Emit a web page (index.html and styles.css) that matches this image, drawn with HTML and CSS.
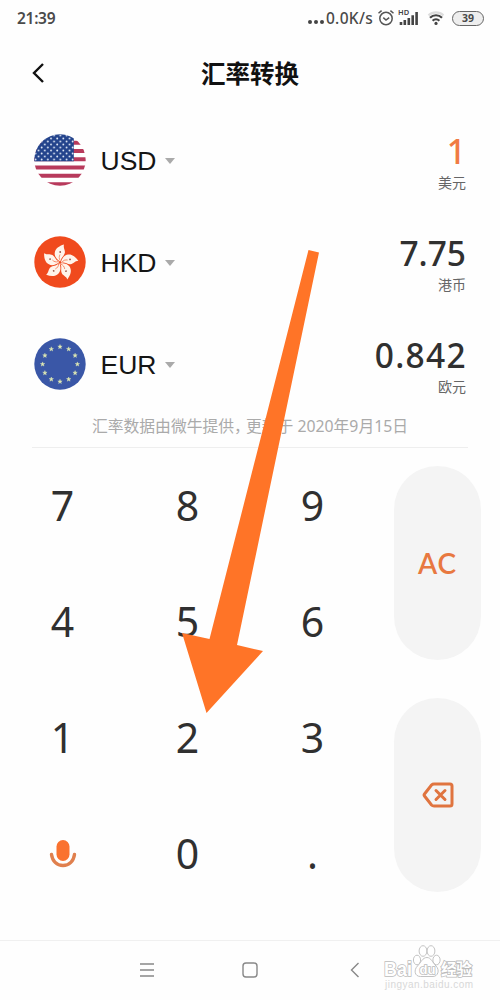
FILE: index.html
```html
<!DOCTYPE html>
<html lang="zh-CN">
<head>
    <meta charset="UTF-8">
    <meta name="viewport" content="width=device-width, initial-scale=1.0">
    <title>汇率转换</title>
    <link rel="stylesheet" href="styles.css">
</head>
<body>
    <div class="status-bar">
        <span class="time">21:39</span>
        <div class="status-icons">
            <span class="dots"><i></i><i></i><i></i></span>
            <span class="speed">0.0K/s</span>
            <svg class="alarm" width="18" height="18" viewBox="0 0 18 18">
                <circle cx="9" cy="9.5" r="6.2"/>
                <path d="M1.5 4.2 4.6 1.6M16.5 4.2 13.4 1.6M6.3 8.6 9 11l3.2-2.4"/>
            </svg>
            <svg class="signal" width="21" height="22" viewBox="0 -2 21 22">
                <text x="0" y="6">HD</text>
                <path d="M3 13v3M6.8 11v5M10.8 9v7M14.7 6.2V16M18.6 3V16"/>
            </svg>
            <svg class="wifi" width="18" height="16" viewBox="0 0 18 16">
                <path class="weak" d="M1.5 5.4a11 11 0 0 1 15 0"/>
                <path d="M3 7.7a8.6 8.6 0 0 1 12 0M5.6 10.7a5 5 0 0 1 6.8 0"/>
                <circle cx="9" cy="13.4" r="1.6"/>
            </svg>
            <span class="battery">39</span>
        </div>
    </div>

    <header>
        <svg class="back" width="14" height="20" viewBox="0 0 14 20"><path d="M12 1 3 10l9 9"/></svg>
        <h1>汇率转换</h1>
    </header>

    <main class="currencies">
        <div class="row">
            <svg class="flag" viewBox="0 0 52 52">
                <defs>
                    <clipPath id="round"><circle cx="26" cy="26" r="25.7"/></clipPath>
                    <pattern id="stars" width="6.2" height="6" patternUnits="userSpaceOnUse">
                        <circle cx="1.5" cy="1.5" r="0.9"/>
                        <circle cx="4.6" cy="4.5" r="0.9"/>
                    </pattern>
                </defs>
                <g clip-path="url(#round)">
                    <rect width="52" height="52" fill="#fff"/>
                    <path d="M0 8.8h52M0 17h52M0 25.2h52M0 33.5h52M0 41.8h52M0 50.2h52" stroke="#b83a5c" stroke-width="4.1"/>
                    <rect width="39.8" height="27.3" fill="#24448c"/>
                    <rect width="39.8" height="27.3" fill="url(#stars)"/>
                </g>
            </svg>
            <span class="code">USD</span><span class="caret"></span>
            <div class="amount">
                <div class="value active">1</div>
                <div class="name">美元</div>
            </div>
        </div>
        <div class="row">
            <svg class="flag" viewBox="0 0 52 52">
                <defs>
                    <g id="petal">
                        <path d="M0-1C-3-3-6-6-5.200-10-4.500-14-1-16.500 4-18 3-14.500 5.500-12.500 4.800-9.500 4.200-6.500 1-5 .8-2z" fill="#fff4ea"/>
                        <path d="M.3-2C-1.200-4-1-6 0-8" fill="none" stroke="#ef5a2c" stroke-width=".6"/>
                        <circle cx=".2" cy="-10.500" r=".9" fill="#9a5546"/>
                    </g>
                </defs>
                <circle cx="26" cy="26" r="25.7" fill="#f04a1d"/>
                <g transform="translate(26 26.5)">
                    <use href="#petal"/>
                    <use href="#petal" transform="rotate(72)"/>
                    <use href="#petal" transform="rotate(144)"/>
                    <use href="#petal" transform="rotate(216)"/>
                    <use href="#petal" transform="rotate(288)"/>
                </g>
            </svg>
            <span class="code">HKD</span><span class="caret"></span>
            <div class="amount">
                <div class="value">7.75</div>
                <div class="name">港币</div>
            </div>
        </div>
        <div class="row">
            <svg class="flag" viewBox="0 0 52 52">
                <defs>
                    <path id="star" d="M0-2.3.6-.7 2.2-.7.9.3 1.4 1.9 0 1-1.4 1.9-.9.3-2.2-.7-.6-.7z"/>
                </defs>
                <circle cx="26" cy="26" r="25.7" fill="#3a57a7"/>
                <g fill="#dfe9b4" stroke="#dfe9b4" stroke-width=".4">
                    <use href="#star" x="26" y="8.8"/>
                    <use href="#star" x="34.7" y="11.1"/>
                    <use href="#star" x="41.1" y="17.5"/>
                    <use href="#star" x="43.4" y="26.2"/>
                    <use href="#star" x="41.1" y="34.9"/>
                    <use href="#star" x="34.7" y="41.3"/>
                    <use href="#star" x="26" y="43.6"/>
                    <use href="#star" x="17.3" y="41.3"/>
                    <use href="#star" x="10.9" y="34.9"/>
                    <use href="#star" x="8.6" y="26.2"/>
                    <use href="#star" x="10.9" y="17.5"/>
                    <use href="#star" x="17.3" y="11.1"/>
                </g>
            </svg>
            <span class="code">EUR</span><span class="caret"></span>
            <div class="amount">
                <div class="value long">0.842</div>
                <div class="name">欧元</div>
            </div>
        </div>
    </main>

    <p class="note">汇率数据由微牛提供<span class="comma">，</span>更新于 2020年9月15日</p>

    <div class="keypad">
        <div class="keys">
            <div class="key">7</div>
            <div class="key">8</div>
            <div class="key">9</div>
            <div class="key">4</div>
            <div class="key">5</div>
            <div class="key">6</div>
            <div class="key">1</div>
            <div class="key">2</div>
            <div class="key">3</div>
            <div class="key mic">
                <svg width="28" height="30" viewBox="0 0 28 30">
                    <rect x="7.5" y="1" width="13" height="21" rx="6.5" fill="#fa722f"/>
                    <path d="M2.5 15.5c1 7 5.5 11 11.5 11s10.500-4 11.500-11" fill="none" stroke="#e0804e" stroke-width="3.400" stroke-linecap="round"/>
                </svg>
            </div>
            <div class="key">0</div>
            <div class="key">.</div>
        </div>
        <div class="side">
            <div class="pill">AC</div>
            <div class="pill">
                <svg width="32" height="26" viewBox="0 0 32 26">
                    <path d="M12 2h16q2 0 2 2v18q0 2-2 2H12q-1.500 0-2.500-1L2.500 14q-.8-1 0-2L9.500 3q1-1 2.500-1z"/>
                    <path d="m14 8.500 9 9m0-9-9 9"/>
                </svg>
            </div>
        </div>
    </div>

    <nav>
        <svg width="16" height="14" viewBox="0 0 16 14"><path d="M1 1h14M1 7h14M1 13h14"/></svg>
        <svg width="16" height="16" viewBox="0 0 16 16"><rect x="1" y="1" width="14" height="14" rx="3"/></svg>
        <svg width="10" height="16" viewBox="0 0 10 16"><path d="M8.500 1 1.500 8l7 7"/></svg>
    </nav>

    <svg class="arrow" viewBox="0 0 82 464">
        <path d="M126.500 0 137 2.500 55 395l26 6L24.500 463 0 383l27.500 6z"/>
    </svg>

    <svg class="watermark" width="94" height="48" viewBox="0 0 94 48">
        <g class="paw">
            <ellipse cx="36" cy="17" rx="3.600" ry="4.800"/>
            <ellipse cx="42" cy="8" rx="3.900" ry="5.300"/>
            <ellipse cx="50" cy="8" rx="3.900" ry="5.300"/>
            <ellipse cx="55.500" cy="17" rx="3.600" ry="4.800"/>
            <path d="M46 14.500c4 0 5.500 5 9 8.500 4 4 2 10.500-3 10.500H39.500c-6 0-7-6.500-3-10.500 3.500-3.500 5-8.500 9.500-8.500z"/>
        </g>
        <text class="brand" x="3" y="33" textLength="28" lengthAdjust="spacingAndGlyphs">Bai</text>
        <text class="du" x="38.500" y="30.500">du</text>
        <text class="cn" x="60" y="32" textLength="31">经验</text>
        <text class="url" x="4" y="44.500" textLength="88">jingyan.baidu.com</text>
    </svg>
</body>
</html>
```
FILE: styles.css
```css
* {
    box-sizing: border-box;
}

body {
    position: relative;
    width: 500px;
    height: 1000px;
    margin: 0;
    overflow: hidden;
    background-color: #fefefe;
    color: #303030;
    font-family: "Noto Sans", "Noto Sans CJK SC", sans-serif;
}

svg {
    display: block;
}

/* status bar */
.status-bar {
    display: flex;
    justify-content: space-between;
    align-items: center;
    height: 36px;
    padding: 0 16px 0 17px;
    color: #4a4a4a;
    font-size: 15.5px;
    font-weight: 600;
}

.time {
    letter-spacing: -0.3px;
}

.status-icons {
    display: flex;
    align-items: center;
}

.dots {
    display: flex;
    gap: 2px;
    margin: 8px 2px 0 0;
}

.dots i {
    width: 4px;
    height: 4px;
    border-radius: 50%;
    background-color: #444;
}

.speed {
    margin-right: 4px;
    font-weight: 500;
    letter-spacing: 0.3px;
}

.alarm {
    margin-right: 3px;
    fill: none;
    stroke: #555;
    stroke-width: 1.5;
}

.signal {
    margin-right: 8px;
    stroke: #444;
    stroke-width: 2.6;
}

.signal text {
    stroke: none;
    fill: #444;
    font-size: 7.5px;
    font-weight: 600;
}

.wifi {
    margin-right: 7px;
    fill: none;
    stroke: #444;
    stroke-width: 2.2;
}

.wifi .weak {
    stroke: #ddd;
}

.wifi circle {
    fill: #444;
    stroke: none;
}

.battery {
    width: 32px;
    height: 15px;
    border: 1.5px solid #666;
    border-radius: 8px;
    background-color: #eee;
    font-size: 10.5px;
    font-weight: 700;
    line-height: 12px;
    text-align: center;
}

/* title */
header {
    display: grid;
    grid-template-columns: 60px 1fr 60px;
    align-items: center;
    height: 73px;
}

.back {
    margin-left: 31px;
    fill: none;
    stroke: #111;
    stroke-width: 2.4;
}

h1 {
    margin: 0;
    color: #111;
    font-family: "Noto Sans CJK SC", sans-serif;
    font-size: 24.5px;
    font-weight: 700;
    line-height: 34px;
    text-align: center;
}

/* currency list */
.currencies {
    padding: 0 34px;
}

.row {
    display: flex;
    align-items: center;
    height: 102px;
}

.flag {
    width: 52px;
    height: 52px;
}

#stars circle {
    fill: #e4ecf8;
}

.code {
    margin: 2px 0 0 14.5px;
    color: #151515;
    font-family: "Liberation Sans", sans-serif;
    font-size: 26.5px;
}

.caret {
    margin: 2px 0 0 8.5px;
    border: 5px solid transparent;
    border-top: 6px solid #aaa;
    border-bottom: 0;
}

.amount {
    margin: 2px 0 0 auto;
    text-align: right;
}

.value {
    height: 43px;
    font-size: 33.5px;
    font-weight: 500;
    line-height: 42px;
}

.value.long {
    letter-spacing: 1.3px;
    margin-right: -1px;
}

.active {
    color: #f07b43;
}

.name {
    height: 20px;
    color: #666;
    font-size: 14px;
    line-height: 20px;
}

.note {
    height: 33px;
    margin: 0 32px;
    border-bottom: 1px solid #eee;
    color: #aaa;
    font-size: 15.8px;
    line-height: 22px;
    text-align: center;
    white-space: nowrap;
}

.comma {
    letter-spacing: -4px;
}

/* keypad */
.keypad {
    display: flex;
    height: 492px;
}

.keys {
    display: grid;
    grid-template-columns: repeat(3, 125px);
    grid-auto-rows: 116px;
}

.key {
    display: flex;
    justify-content: center;
    align-items: center;
    padding-bottom: 2px;
    font-size: 41px;
}

.mic {
    padding-bottom: 0;
}

.side {
    display: flex;
    flex-direction: column;
    gap: 38px;
    margin: 18px 0 0 19px;
}

.pill {
    display: flex;
    justify-content: center;
    align-items: center;
    width: 87px;
    height: 194px;
    border-radius: 44px;
    background-color: #f4f4f4;
    color: #e87840;
    font-family: Lato, sans-serif;
    font-size: 28px;
    font-weight: 600;
    letter-spacing: 0.8px;
}

.pill svg {
    fill: none;
    stroke: #e0743f;
    stroke-width: 3;
    stroke-linecap: round;
}

/* system navigation */
nav {
    display: flex;
    gap: 88px;
    align-items: center;
    height: 60px;
    padding: 0 0 2px 139px;
    border-top: 1px solid #f0f0f0;
}

nav svg {
    fill: none;
    stroke: #888;
    stroke-width: 1.4;
}

nav svg:nth-child(2) {
    margin-left: -1px;
}

nav svg:nth-child(3) {
    margin-left: 4px;
}

/* overlays */
.arrow {
    position: absolute;
    left: 182px;
    top: 250px;
    width: 82px;
    height: 464px;
    overflow: visible;
    fill: #ff7427;
}

.watermark {
    position: absolute;
    left: 381px;
    top: 943px;
    fill: #fff;
    stroke: #bbb;
    stroke-width: 0.9;
}

.watermark text {
    font-family: "Liberation Sans", "Noto Sans CJK SC", sans-serif;
    font-weight: 700;
    stroke-width: 1.6;
    paint-order: stroke;
}

.brand {
    font-size: 20px;
}

.du {
    font-size: 13px;
}

.cn {
    font-size: 16px;
}

.watermark .url {
    fill: #d8d8d8;
    stroke: none;
    font-size: 10px;
    font-weight: 400;
}
```
